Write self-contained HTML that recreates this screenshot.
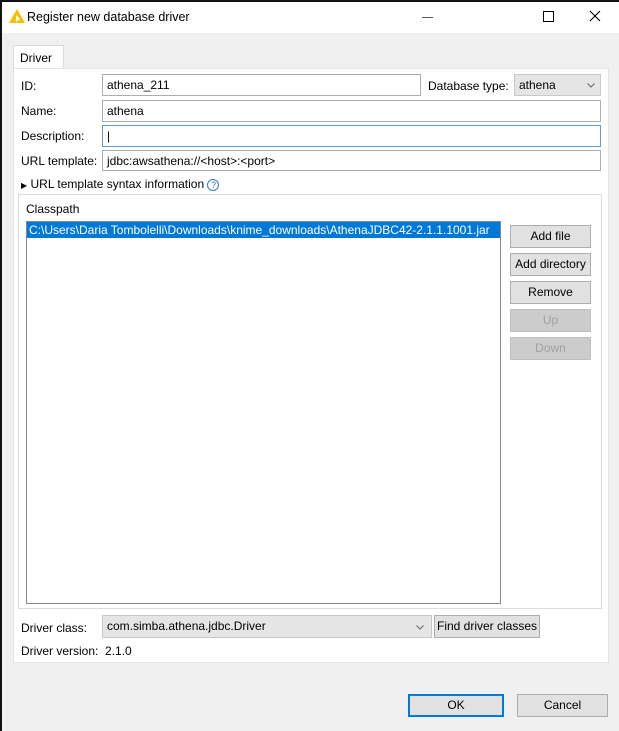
<!DOCTYPE html>
<html><head><style>
body{margin:0;width:619px;height:731px;background:#f0f0f0;font-family:"Liberation Sans",sans-serif;font-size:12px;color:#000;position:relative;overflow:hidden}
.a{position:absolute}
.in{position:absolute;background:#fff;border:1px solid #adadad;box-sizing:border-box;padding:3px 4px;line-height:14px;white-space:nowrap}
.btn{position:absolute;background:#e1e1e1;border:1px solid #adadad;box-sizing:border-box;text-align:center;line-height:21px}
.dis{color:#a0a0a0;background:#cccccc;border-color:#bfbfbf}
.lbl{position:absolute;line-height:14px}
</style></head><body>
<div class="a" style="left:0;top:0;width:619px;height:33px;background:#fff"></div>
<div class="a" style="left:0;top:0;width:2px;height:731px;background:#111"></div>
<div class="a" style="left:0;top:0;width:619px;height:2px;background:#111"></div>
<svg class="a" style="left:9px;top:9px" width="16" height="14"><polygon points="8,0 16,14 0,14" fill="#f6c000"/><polygon points="7,6 11,10 7,13" fill="#fff"/></svg>
<div class="lbl" style="left:27px;top:10px;font-size:12.5px">Register new database driver</div>
<div class="a" style="left:422px;top:17px;width:11px;height:1px;background:#555"></div>
<div class="a" style="left:543px;top:11px;width:9px;height:9px;border:1px solid #000"></div>
<svg class="a" style="left:589px;top:10px" width="12" height="12"><path d="M1 1L11 11M11 1L1 11" stroke="#000" stroke-width="1.1"/></svg>
<div class="a" style="left:13px;top:45px;width:51px;height:24px;background:#fff;border:1px solid #dadada;border-bottom:none;box-sizing:border-box"></div>
<div class="lbl" style="left:20px;top:51px">Driver</div>
<div class="a" style="left:13px;top:68px;width:596px;height:595px;background:#fff;border:1px solid #e3e3e3;box-sizing:border-box"></div>
<div class="lbl" style="left:21px;top:79px">ID:</div>
<div class="in" style="left:102px;top:74px;width:319px;height:22px">athena_211</div>
<div class="lbl" style="left:428px;top:79px">Database type:</div>
<div class="in" style="left:514px;top:74px;width:87px;height:22px;background:#e5e5e5;border-color:#c8c8c8">athena<svg style="position:absolute;right:5px;top:8px" width="8" height="5"><path d="M0.5 0.5L4 4L7.5 0.5" stroke="#666" fill="none"/></svg></div>
<div class="lbl" style="left:21px;top:104px">Name:</div>
<div class="in" style="left:102px;top:100px;width:499px;height:22px">athena</div>
<div class="lbl" style="left:21px;top:129px">Description:</div>
<div class="in" style="left:102px;top:125px;width:499px;height:22px;border-color:#5a9fd8">|</div>
<div class="lbl" style="left:21px;top:154px">URL template:</div>
<div class="in" style="left:102px;top:150px;width:499px;height:21px">jdbc:awsathena://&lt;host&gt;:&lt;port&gt;</div>
<div class="lbl" style="left:21px;top:177px"><span style="font-size:8px">&#9654;</span> URL template syntax information <span style="display:inline-block;width:10px;height:10px;border:1px solid #2a7bd0;border-radius:50%;font-size:9px;line-height:10px;text-align:center;color:#2a7bd0">?</span></div>
<div class="a" style="left:18px;top:194px;width:584px;height:415px;border:1px solid #dcdcdc;box-sizing:border-box"></div>
<div class="lbl" style="left:26px;top:202px">Classpath</div>
<div class="a" style="left:26px;top:221px;width:475px;height:383px;border:1px solid #828790;box-sizing:border-box;background:#fff"></div>
<div class="a" style="left:27px;top:222px;width:473px;height:16px;background:#0078d7;color:#fff;line-height:16px;padding-left:2px;box-sizing:border-box;white-space:nowrap">C:\Users\Daria Tombolelli\Downloads\knime_downloads\AthenaJDBC42-2.1.1.1001.jar</div>
<div class="btn" style="left:510px;top:225px;width:81px;height:23px">Add file</div>
<div class="btn" style="left:510px;top:253px;width:81px;height:23px">Add directory</div>
<div class="btn" style="left:510px;top:281px;width:81px;height:23px">Remove</div>
<div class="btn dis" style="left:510px;top:309px;width:81px;height:23px">Up</div>
<div class="btn dis" style="left:510px;top:337px;width:81px;height:23px">Down</div>
<div class="lbl" style="left:21px;top:621px">Driver class:</div>
<div class="in" style="left:102px;top:615px;width:330px;height:23px;background:#e5e5e5;border-color:#c8c8c8">com.simba.athena.jdbc.Driver<svg style="position:absolute;right:7px;top:9px" width="8" height="5"><path d="M0.5 0.5L4 4L7.5 0.5" stroke="#666" fill="none"/></svg></div>
<div class="btn" style="left:434px;top:615px;width:106px;height:23px">Find driver classes</div>
<div class="lbl" style="left:21px;top:644px">Driver version:&nbsp; 2.1.0</div>
<div class="btn" style="left:408px;top:694px;width:96px;height:23px;border:2px solid #0078d7;line-height:19px">OK</div>
<div class="btn" style="left:517px;top:694px;width:91px;height:23px">Cancel</div>
</body></html>
